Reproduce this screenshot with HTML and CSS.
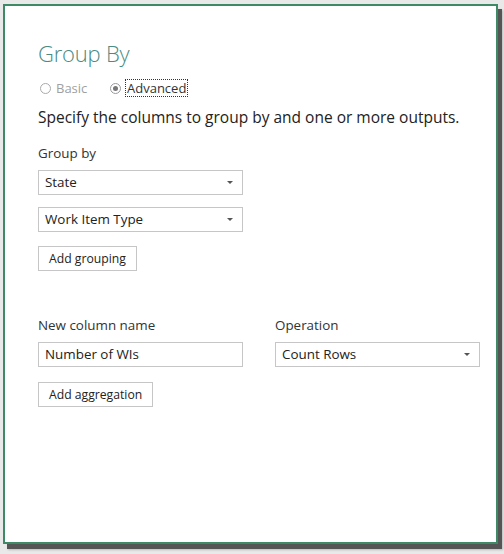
FILE: index.html
```html
<!DOCTYPE html>
<html>
<head>
<meta charset="utf-8">
<link rel="stylesheet" href="styles.css">
</head>
<body>
<div class="frame">
  <div class="dialog">
    <h1 class="title">Group By</h1>
    <div class="radios">
      <label class="radio disabled"><span class="dot"></span>Basic</label>
      <label class="radio checked"><span class="dot"><span class="inner"></span></span><span class="focus">Advanced</span></label>
    </div>
    <p class="desc">Specify the columns to group by and one or more outputs.</p>
    <div class="label first">Group by</div>
    <div class="select">State<span class="arrow"></span></div>
    <div class="select">Work Item Type<span class="arrow"></span></div>
    <div class="btn grp">Add grouping</div>
    <div class="agg-row">
      <div class="col">
        <div class="label">New column name</div>
        <div class="input">Number of WIs</div>
      </div>
      <div class="col">
        <div class="label">Operation</div>
        <div class="select wide">Count Rows<span class="arrow"></span></div>
      </div>
    </div>
    <div class="btn agg">Add aggregation</div>
  </div>
</div>
</body>
</html>
```
FILE: styles.css
```css
html, body { margin: 0; padding: 0; }
body {
  width: 504px; height: 554px;
  background: #e9e9e9;
  font-family: "Open Sans", "Noto Sans", sans-serif;
  color: #333;
  overflow: hidden;
}
.frame {
  padding: 4px 0 0 3px;
}
.dialog {
  box-sizing: border-box;
  width: 495px; height: 540px;
  background: #fff;
  border: 2px solid #3f8a66;
  box-shadow: 4px 5px 0 #555, 5px 6px 2px #bbb;
  padding: 0 0 0 33px;
}
.title {
  margin: 32px 0 0 0;
  font-weight: 300;
  font-size: 22px;
  line-height: 30px;
  color: #4a8b83;
  letter-spacing: -0.2px;
}
.radios {
  display: flex;
  align-items: center;
  margin-top: 10px;
  height: 20px;
  font-size: 13px;
}
.radio { display: flex; align-items: center; }
.radio.disabled { color: #a0a0a0; width: 70px; }
.dot {
  box-sizing: border-box;
  width: 11px; height: 11px;
  border: 1px solid #aaa;
  border-radius: 50%;
  margin: 0 5px 0 2px;
  display: flex; align-items: center; justify-content: center;
  background: #fff;
}
.checked .dot { border-color: #999; }
.inner { width: 5px; height: 5px; border-radius: 50%; background: #777; }
.focus {
  outline: 1px dotted #333;
  padding: 0 1px;
  line-height: 16px;
  color: #333;
}
.desc {
  margin: 9px 0 0 0;
  font-size: 15.5px;
  line-height: 20px;
  color: #222;
  letter-spacing: 0;
}
.label {
  font-size: 13.4px;
  line-height: 18px;
  color: #333;
}
.label.first { margin-top: 17px; }
.select, .input {
  box-sizing: border-box;
  position: relative;
  width: 205px; height: 25px;
  border: 1px solid #c6c6c6;
  font-size: 13.4px;
  line-height: 23px;
  padding-left: 6px;
  color: #222;
  margin-top: 8px;
}
.select + .select { margin-top: 12px; }
.arrow {
  position: absolute;
  right: 9px; top: 10px;
  width: 0; height: 0;
  border-left: 3px solid transparent;
  border-right: 3px solid transparent;
  border-top: 3px solid #555;
}
.btn {
  box-sizing: border-box;
  display: inline-block;
  height: 25px;
  border: 1px solid #c6c6c6;
  font-size: 12.2px;
  line-height: 23px;
  padding: 0 10px;
  color: #222;
  background: #fff;
}
.btn.grp { margin-top: 14px; }
.agg-row {
  display: flex;
  gap: 32px;
  margin-top: 45px;
}
.select.wide { width: 205px; }
.btn.agg { margin-top: 15px; }
```
